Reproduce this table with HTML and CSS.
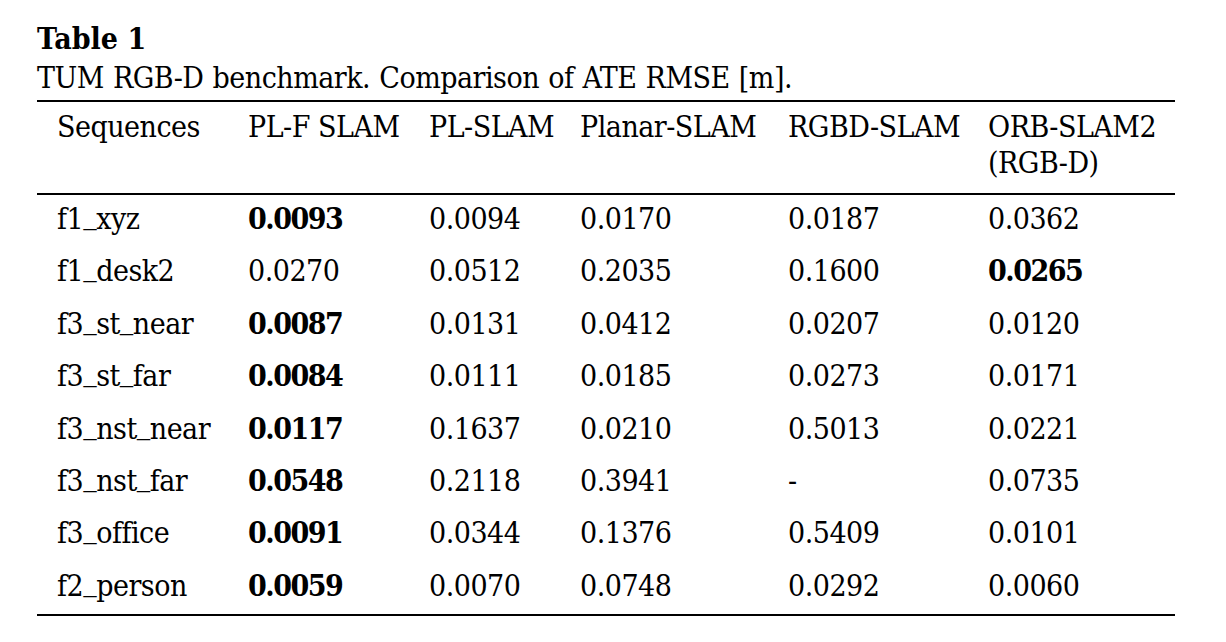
FILE: index.html
```html
<!DOCTYPE html>
<html>
<head>
<meta charset="utf-8">
<link rel="stylesheet" href="styles.css">
</head>
<body>
<div class="page">
  <div class="title">Table 1</div>
  <div class="caption">TUM RGB-D benchmark. Comparison of ATE RMSE [m].</div>
  <table class="tbl">
    <colgroup>
      <col class="c1"><col class="c2"><col class="c3"><col class="c4"><col class="c5"><col class="c6">
    </colgroup>
    <thead>
      <tr>
        <th>Sequences</th>
        <th>PL-F SLAM</th>
        <th>PL-SLAM</th>
        <th>Planar-SLAM</th>
        <th>RGBD-SLAM</th>
        <th>ORB-SLAM2<br>(RGB-D)</th>
      </tr>
    </thead>
    <tbody>
      <tr><td>f1<span class="us">_</span>xyz</td><td class="b">0.0093</td><td>0.0094</td><td>0.0170</td><td>0.0187</td><td>0.0362</td></tr>
      <tr><td>f1<span class="us">_</span>desk2</td><td>0.0270</td><td>0.0512</td><td>0.2035</td><td>0.1600</td><td class="b">0.0265</td></tr>
      <tr><td>f3<span class="us">_</span>st<span class="us">_</span>near</td><td class="b">0.0087</td><td>0.0131</td><td>0.0412</td><td>0.0207</td><td>0.0120</td></tr>
      <tr><td>f3<span class="us">_</span>st<span class="us">_</span>far</td><td class="b">0.0084</td><td>0.0111</td><td>0.0185</td><td>0.0273</td><td>0.0171</td></tr>
      <tr><td>f3<span class="us">_</span>nst<span class="us">_</span>near</td><td class="b">0.0117</td><td>0.1637</td><td>0.0210</td><td>0.5013</td><td>0.0221</td></tr>
      <tr><td>f3<span class="us">_</span>nst<span class="us">_</span>far</td><td class="b">0.0548</td><td>0.2118</td><td>0.3941</td><td>-</td><td>0.0735</td></tr>
      <tr><td>f3<span class="us">_</span>office</td><td class="b">0.0091</td><td>0.0344</td><td>0.1376</td><td>0.5409</td><td>0.0101</td></tr>
      <tr><td>f2<span class="us">_</span>person</td><td class="b">0.0059</td><td>0.0070</td><td>0.0748</td><td>0.0292</td><td>0.0060</td></tr>
    </tbody>
  </table>
</div>
</body>
</html>
```

FILE: styles.css
```css
html, body {
  margin: 0;
  padding: 0;
  background: #ffffff;
}
.page {
  padding: 19px 0 0 37px;
  font-family: "DejaVu Serif Condensed", "DejaVu Serif", serif;
  font-stretch: condensed;
  font-size: 30px;
  color: #000;
}
.title {
  font-weight: bold;
  line-height: 39px;
}
.caption {
  line-height: 39px;
  letter-spacing: -0.5px;
  word-spacing: 1px;
}
.tbl {
  margin-top: 3px;
  border-collapse: collapse;
  table-layout: fixed;
  width: 1138px;
  border-top: 2px solid #000;
  border-bottom: 2px solid #000;
  letter-spacing: -0.5px;
}
.c1 { width: 191px; }
.c2 { width: 181px; }
.c3 { width: 151px; }
.c4 { width: 208px; }
.c5 { width: 200px; }
.c6 { width: 207px; }
.tbl th {
  font-weight: normal;
  text-align: left;
  vertical-align: top;
  line-height: 36px;
  padding: 7px 0 12px 20px;
  border-bottom: 2px solid #000;
  white-space: nowrap;
}
.tbl td {
  line-height: 36px;
  padding: 6px 0 10.4px 20px;
  white-space: nowrap;
}
.tbl td.b {
  font-weight: bold;
  letter-spacing: -1.5px;
}
.us {
  display: inline-block;
  transform: translateY(-6px);
}
```
